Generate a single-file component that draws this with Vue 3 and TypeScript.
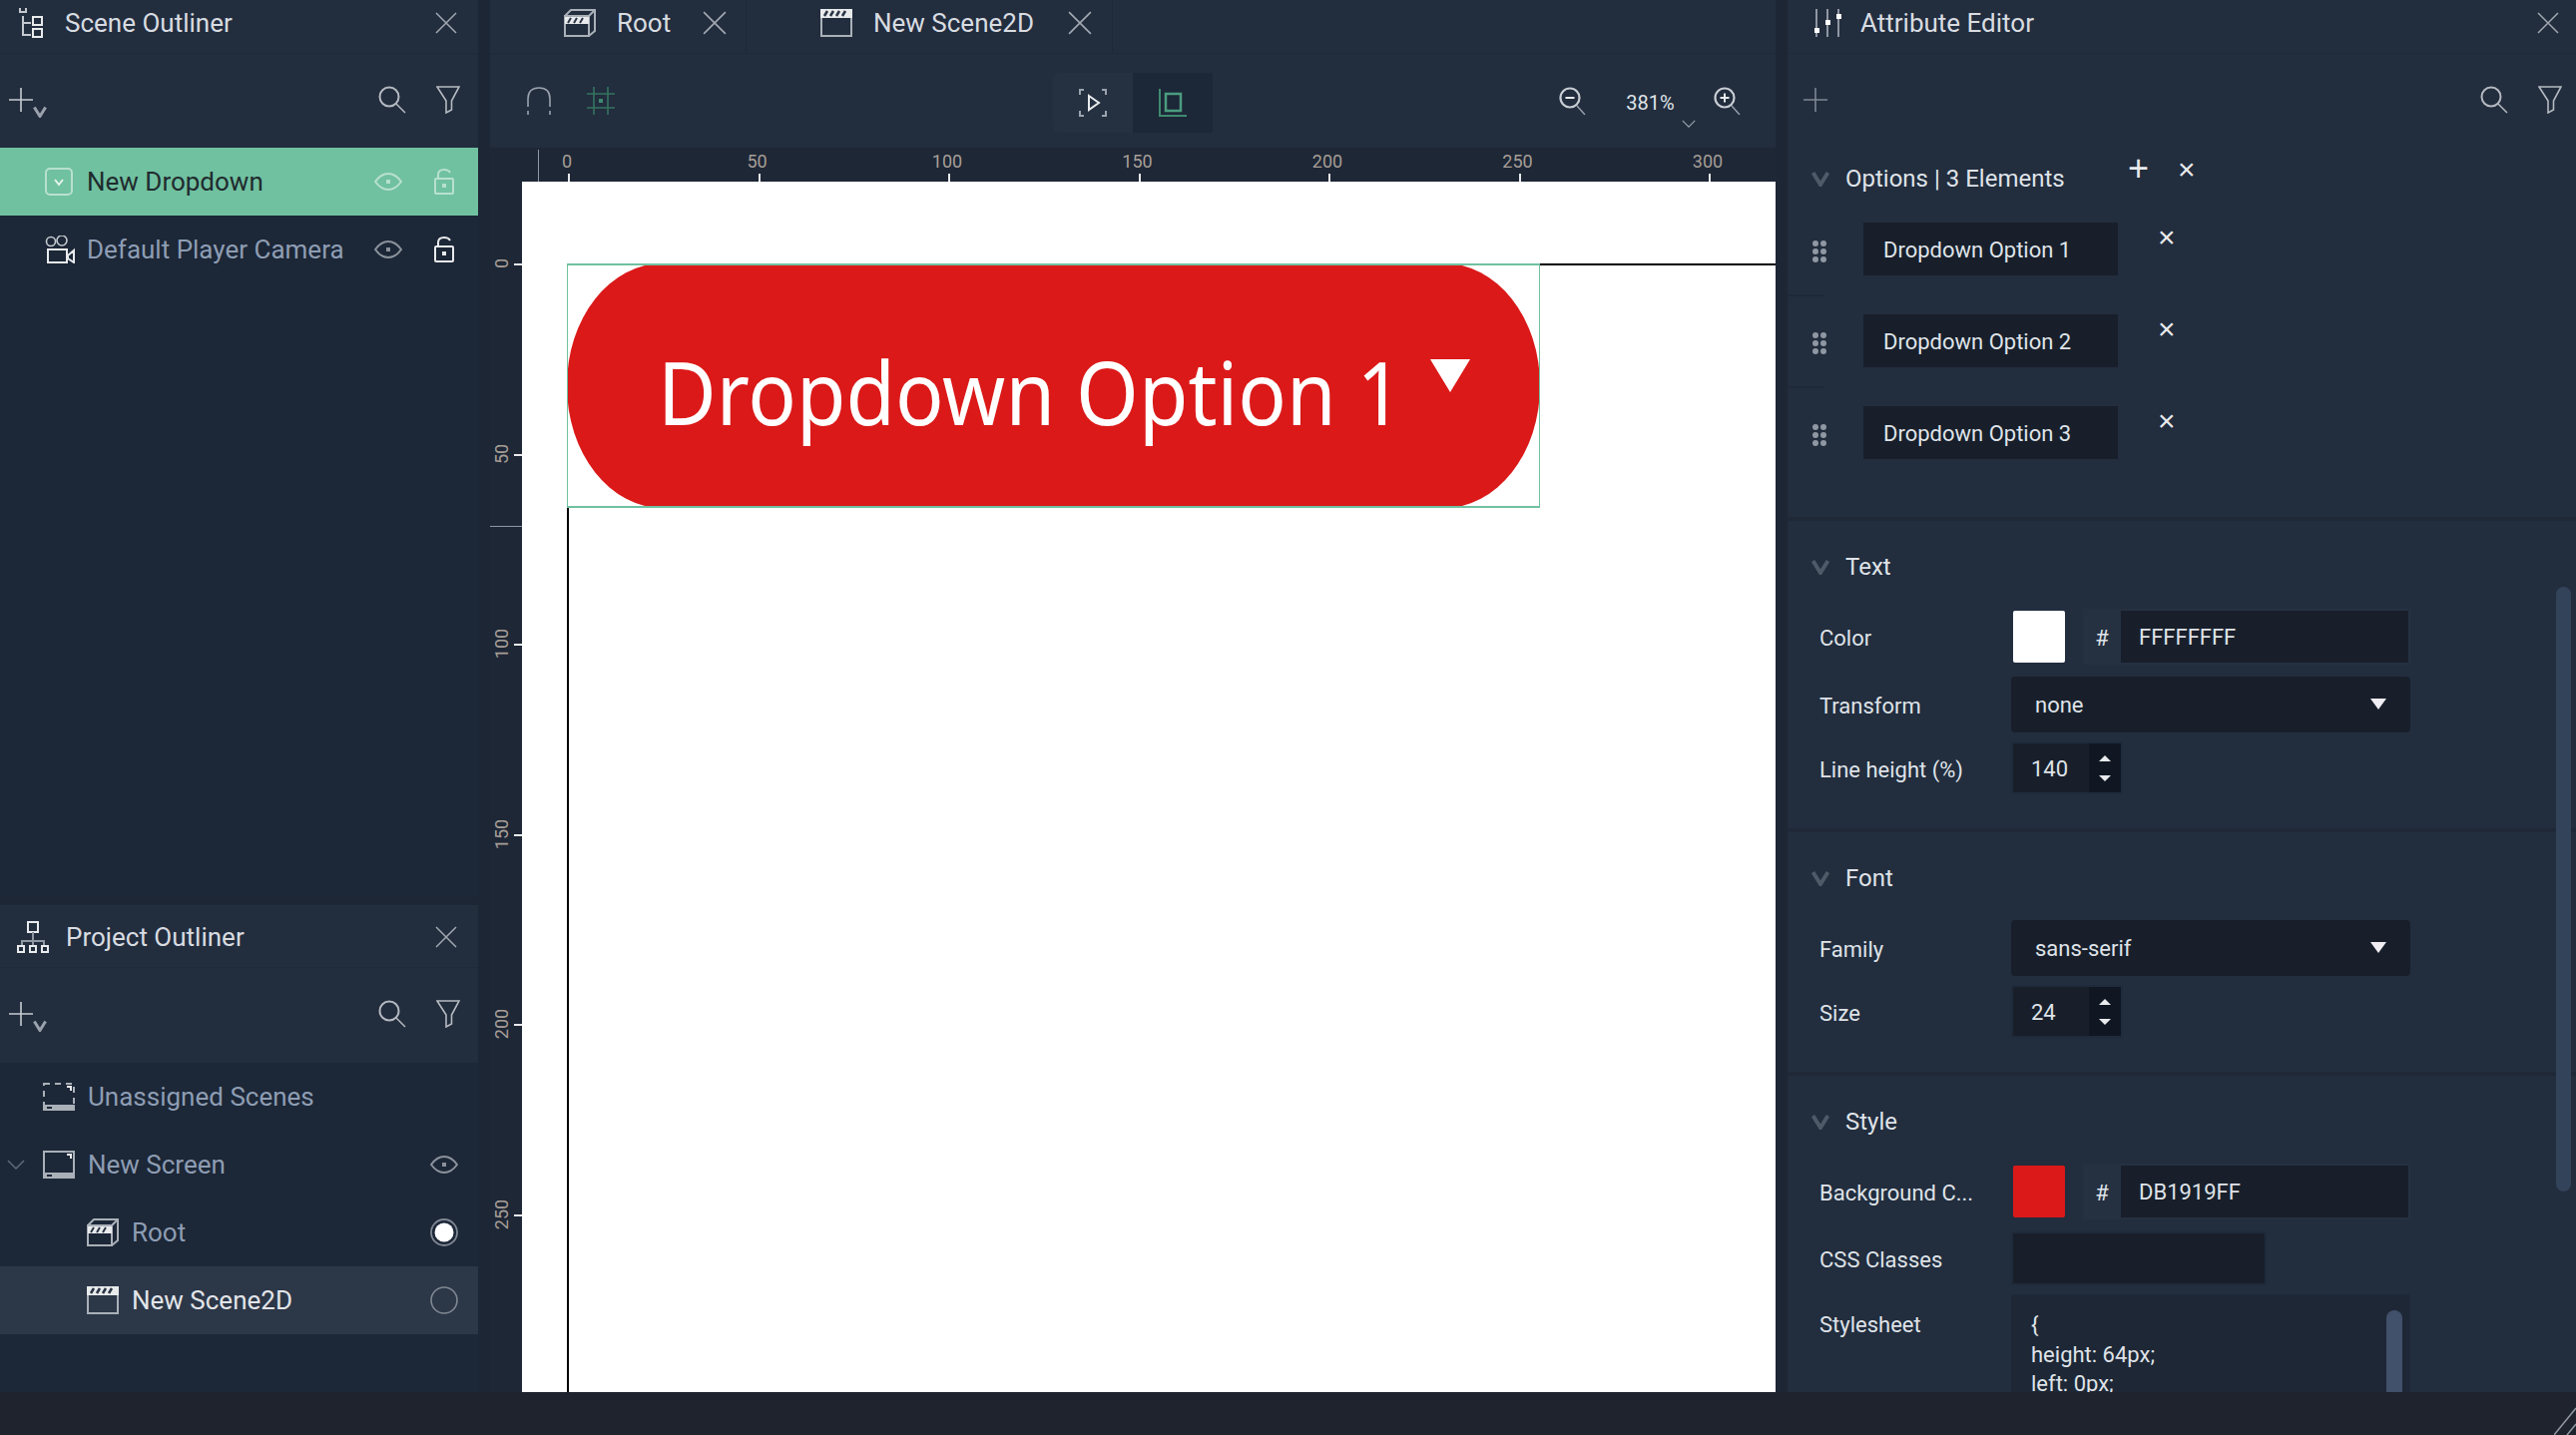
<template>
  <div class="app">
    <svg class="defs" width="0" height="0" aria-hidden="true">
      <symbol id="i-x" viewBox="0 0 22 22"><path d="M1 1L21 21M21 1L1 21" fill="none" stroke="currentColor" stroke-width="1.5" /></symbol>
      <symbol id="i-search" viewBox="0 0 28 28"><circle cx="11" cy="11" r="9.5" fill="none" stroke="currentColor" stroke-width="2" /><path d="M18 18L27 27" stroke="currentColor" stroke-width="1.5" /></symbol>
      <symbol id="i-filter" viewBox="0 0 24 28"><path d="M1 1H23L15.5 15V24L10 27V15Z" fill="none" stroke="currentColor" stroke-width="1.6" /></symbol>
      <symbol id="i-plus" viewBox="0 0 24 24"><path d="M12 0V24M0 12H24" stroke="currentColor" stroke-width="1.6" /></symbol>
      <symbol id="i-chev" viewBox="0 0 18 16"><path d="M1.500 2L9 14L16.500 2" fill="none" stroke="currentColor" stroke-width="4" /></symbol>
      <symbol id="i-chev-thin" viewBox="0 0 18 10"><path d="M1 1L9 9L17 1" fill="none" stroke="currentColor" stroke-width="1.5" /></symbol>
      <symbol id="i-eye" viewBox="0 0 28 18"><path d="M1 9C6 2 10 1 14 1S22 2 27 9C22 16 18 17 14 17S6 16 1 9Z" fill="none" stroke="currentColor" stroke-width="2" /><rect x="12" y="7" width="4" height="4" fill="currentColor" /></symbol>
      <symbol id="i-lock" viewBox="0 0 20 26"><path d="M4 9V6C4 3 6 1 10 1C13 1 15 2 16 4" fill="none" stroke="currentColor" stroke-width="2" /><rect x="1" y="10" width="18" height="15" rx="1" fill="none" stroke="currentColor" stroke-width="2" /><rect x="8" y="15" width="4" height="4" fill="currentColor" /></symbol>
      <symbol id="i-clap" viewBox="0 0 32 28"><rect x="1" y="1" width="30" height="26" fill="none" stroke="#aab0b8" stroke-width="2" /><rect x="0" y="0" width="32" height="9" fill="#e8eaec" /><path d="M4 7L7 2M10 7L13 2M16 7L19 2M22 7L25 2" stroke="#2a3444" stroke-width="2.5" /></symbol>
      <symbol id="i-clap3d" viewBox="0 0 32 28"><path d="M1 7H25V27H1ZM25 27L31 22V1H7L1 7M25 7L31 1" fill="none" stroke="#aab0b8" stroke-width="2" /><rect x="1" y="8" width="24" height="7" fill="#e8eaec" /><path d="M4 14L7 9M10 14L13 9M16 14L19 9" stroke="#2a3444" stroke-width="2" /></symbol>
      <symbol id="i-screen" viewBox="0 0 32 28"><rect x="1" y="1" width="30" height="26" fill="none" stroke="#aab0b8" stroke-width="2" /><rect x="0" y="22" width="32" height="6" fill="#aab0b8" /><rect x="4" y="24" width="5" height="2" fill="#1c2737" /><path d="M24 4H28V8" fill="none" stroke="#e8eaec" stroke-width="2" /></symbol>
      <symbol id="i-screen-dash" viewBox="0 0 32 28"><rect x="1" y="1" width="30" height="26" fill="none" stroke="#aab0b8" stroke-width="2" stroke-dasharray="6 5" /><rect x="0" y="22" width="32" height="6" fill="#aab0b8" /><rect x="4" y="24" width="5" height="2" fill="#1c2737" /><path d="M24 4H28V8" fill="none" stroke="#e8eaec" stroke-width="2" /></symbol>
      <symbol id="i-knob" viewBox="0 0 28 28"><circle cx="14" cy="14" r="13" fill="none" stroke="currentColor" stroke-width="1.8" /><circle cx="14" cy="14" r="9.5" fill="#fff" /></symbol>
      <symbol id="i-ring" viewBox="0 0 28 28"><circle cx="14" cy="14" r="13" fill="none" stroke="currentColor" stroke-width="1.6" /></symbol>
    </svg>

    <div class="col-left">
      <section class="panel outliner-top">
        <header class="panel-head">
          <svg class="head-ic" width="26" height="30" viewBox="0 0 26 30"><path d="M1 0V4H7V0M4 8V27H12M4 15H12" fill="none" stroke="#c4c9cf" stroke-width="2" /><rect x="14" y="9" width="9" height="8" fill="none" stroke="#e8eaec" stroke-width="2" /><rect x="14" y="21" width="9" height="8" fill="none" stroke="#e8eaec" stroke-width="2" /></svg>
          <span class="head-title">Scene Outliner</span>
          <svg class="ic-x"><use href="#i-x" /></svg>
        </header>
        <div class="tools">
          <svg class="ic-plus"><use href="#i-plus" /></svg>
          <svg class="ic-mini"><use href="#i-chev" /></svg>
          <svg class="ic-search"><use href="#i-search" /></svg>
          <svg class="ic-filter"><use href="#i-filter" /></svg>
        </div>
        <div class="tree">
          <div class="row selected">
            <svg class="row-ic" width="28" height="28" viewBox="0 0 28 28"><rect x="1" y="1" width="26" height="26" rx="4" fill="none" stroke="#b8e0cf" stroke-width="2" /><path d="M10 12L14 17L18 12" fill="none" stroke="#e6f4ee" stroke-width="2" /></svg>
            <span class="row-text">New Dropdown</span>
            <svg class="ic-eye"><use href="#i-eye" /></svg>
            <svg class="ic-lock"><use href="#i-lock" /></svg>
          </div>
          <div class="row">
            <svg class="row-ic camera" width="30" height="28" viewBox="0 0 30 28"><circle cx="6" cy="6" r="4.5" fill="none" stroke="#c4c9cf" stroke-width="1.6" /><circle cx="17" cy="5" r="5" fill="none" stroke="#c4c9cf" stroke-width="1.6" /><rect x="3" y="14" width="19" height="13" fill="none" stroke="#e8eaec" stroke-width="2" /><path d="M23 20L29 15V27L23 23Z" fill="none" stroke="#e8eaec" stroke-width="2" /></svg>
            <span class="row-text">Default Player Camera</span>
            <svg class="ic-eye"><use href="#i-eye" /></svg>
            <svg class="ic-lock white"><use href="#i-lock" /></svg>
          </div>
        </div>
      </section>

      <section class="panel outliner-bottom">
        <header class="panel-head tall">
          <svg class="head-ic" width="32" height="32" viewBox="0 0 32 32"><rect x="11" y="1" width="10" height="10" fill="none" stroke="#e8eaec" stroke-width="2" /><path d="M16 11V20M5 25V20H27V25M16 20V25" fill="none" stroke="#8f97a3" stroke-width="2" /><rect x="1" y="25" width="6" height="6" fill="none" stroke="#e8eaec" stroke-width="2" /><rect x="13" y="25" width="6" height="6" fill="none" stroke="#e8eaec" stroke-width="2" /><rect x="25" y="25" width="6" height="6" fill="none" stroke="#e8eaec" stroke-width="2" /></svg>
          <span class="head-title">Project Outliner</span>
          <svg class="ic-x"><use href="#i-x" /></svg>
        </header>
        <div class="tools tools-bottom">
          <svg class="ic-plus"><use href="#i-plus" /></svg>
          <svg class="ic-mini"><use href="#i-chev" /></svg>
          <svg class="ic-search"><use href="#i-search" /></svg>
          <svg class="ic-filter"><use href="#i-filter" /></svg>
        </div>
        <div class="tree">
          <div class="row top-level">
            <svg class="row-ic wide"><use href="#i-screen-dash" /></svg>
            <span class="row-text">Unassigned Scenes</span>
          </div>
          <div class="row top-level">
            <svg class="row-caret"><use href="#i-chev-thin" /></svg>
            <svg class="row-ic wide"><use href="#i-screen" /></svg>
            <span class="row-text">New Screen</span>
            <svg class="ic-eye solo"><use href="#i-eye" /></svg>
          </div>
          <div class="row child">
            <svg class="row-ic wide"><use href="#i-clap3d" /></svg>
            <span class="row-text">Root</span>
            <svg class="ic-radio"><use href="#i-knob" /></svg>
          </div>
          <div class="row child hover">
            <svg class="row-ic wide"><use href="#i-clap" /></svg>
            <span class="row-text">New Scene2D</span>
            <svg class="ic-radio"><use href="#i-ring" /></svg>
          </div>
        </div>
      </section>
    </div>

    <main class="col-center">
      <div class="tabs">
        <div class="tab tab-root">
          <svg class="tab-ic"><use href="#i-clap3d" /></svg>
          <span class="tab-text">Root</span>
          <svg class="ic-x tab-x"><use href="#i-x" /></svg>
        </div>
        <div class="tab tab-scene">
          <svg class="tab-ic"><use href="#i-clap" /></svg>
          <span class="tab-text">New Scene2D</span>
          <svg class="ic-x tab-x"><use href="#i-x" /></svg>
        </div>
      </div>
      <div class="canvas-tools">
        <div class="tools-left">
          <svg width="26" height="28" viewBox="0 0 26 28"><path d="M2 20V12C2 5 6 1 13 1S24 5 24 12V20" fill="none" stroke="#9aa2ad" stroke-width="1.6" /><path d="M2 24V28M24 24V28" stroke="#9aa2ad" stroke-width="1.6" /></svg>
          <svg width="28" height="28" viewBox="0 0 28 28"><path d="M7 0V28M21 0V28M0 7H28M0 21H28" stroke="#35745f" stroke-width="1.6" /><rect x="12" y="12" width="4" height="4" fill="#3f8a70" /></svg>
        </div>
        <div class="mode-group">
          <div class="mode-btn">
            <svg width="30" height="28" viewBox="0 0 30 28"><path d="M6 1H2V6M24 1H28V6M6 27H2V22M24 27H28V22" fill="none" stroke="#9aa2ad" stroke-width="2" /><path d="M11 7L21 14L11 21Z" fill="none" stroke="#e8eaec" stroke-width="2" /></svg>
          </div>
          <div class="mode-btn active">
            <svg width="28" height="28" viewBox="0 0 28 28"><path d="M1 0V27H28" fill="none" stroke="#3f8a70" stroke-width="2" /><rect x="7" y="5" width="15" height="17" fill="none" stroke="#4b9c80" stroke-width="2.500" /></svg>
          </div>
        </div>
        <div class="zoom-box">
          <svg width="28" height="28" viewBox="0 0 28 28"><circle cx="11" cy="11" r="9.5" fill="none" stroke="#c9ced4" stroke-width="2.2" /><path d="M18 19L26 28" stroke="#9aa2ad" stroke-width="1.4" /><path d="M6.500 11H15.500" stroke="#e8eaec" stroke-width="2" /></svg>
          <span class="zoom-val">381%</span>
          <svg class="zoom-caret"><use href="#i-chev-thin" /></svg>
          <svg width="28" height="28" viewBox="0 0 28 28"><circle cx="11" cy="11" r="9.500" fill="none" stroke="#c9ced4" stroke-width="2.2" /><path d="M18 19L26 28" stroke="#9aa2ad" stroke-width="1.4" /><path d="M6.500 11H15.500M11 6.500V15.500" stroke="#e8eaec" stroke-width="2" /></svg>
        </div>
      </div>
      <div class="ruler-top">
        <i class="ruler-mark"></i>
        <div v-for="(v, i) in rulerX" :key="v" class="tick-x" :style="{ left: `${78 + i * 190.5}px` }">
          <span>{{ v }}</span>
          <i></i>
        </div>
      </div>
      <div class="stage">
        <div class="ruler-left">
          <div v-for="(v, i) in rulerY" :key="v" class="tick-y" :style="{ top: `${82 + i * 190.5}px` }">
            <span>{{ v }}</span>
            <i></i>
          </div>
          <i class="ruler-line"></i>
        </div>
        <div class="canvas">
          <i class="guide-h"></i>
          <i class="guide-v"></i>
          <div class="dropdown">
            <span class="dropdown-text">Dropdown Option 1</span>
            <i class="dropdown-arrow"></i>
          </div>
          <i class="selection"></i>
        </div>
      </div>
    </main>

    <aside class="col-right">
      <header class="panel-head right-head">
        <svg class="head-ic" width="28" height="28" viewBox="0 0 28 28"><path d="M3 0V28M14 0V28M25 0V28" stroke="#8f97a3" stroke-width="2" /><rect x="1" y="19" width="5" height="5" fill="#fff" /><rect x="12" y="11" width="5" height="5" fill="#fff" /><rect x="23" y="5" width="5" height="5" fill="#fff" /></svg>
        <span class="head-title">Attribute Editor</span>
        <svg class="ic-x"><use href="#i-x" /></svg>
      </header>
      <div class="tools right-tools">
        <svg class="ic-plus dim"><use href="#i-plus" /></svg>
        <svg class="ic-search"><use href="#i-search" /></svg>
        <svg class="ic-filter"><use href="#i-filter" /></svg>
      </div>
      <div class="attrs">
        <section class="sect sect-options">
          <div class="sect-head options-head">
            <svg class="sect-caret"><use href="#i-chev" /></svg>
            <span>Options | 3 Elements</span>
            <b class="opt-plus">+</b>
            <b class="opt-x">×</b>
          </div>
          <template v-for="(o, i) in options" :key="o">
            <div class="option">
              <div class="grip"><i v-for="n in 6" :key="n"></i></div>
              <div class="opt-input">{{ o }}</div>
              <b class="opt-del">×</b>
            </div>
            <i v-if="i < options.length - 1" class="stub"></i>
          </template>
        </section>

        <section class="sect">
          <div class="sect-head">
            <svg class="sect-caret"><use href="#i-chev" /></svg>
            <span>Text</span>
          </div>
          <div class="field color-field">
            <label>Color</label>
            <i class="swatch white-swatch"></i>
            <div class="hex"><span class="hash">#</span><span class="hex-val">FFFFFFFF</span></div>
          </div>
          <div class="field select-field">
            <label>Transform</label>
            <div class="select">none<i class="caret"></i></div>
          </div>
          <div class="field spin-field">
            <label>Line height (%)</label>
            <div class="spin"><span class="spin-val">140</span><span class="spin-btns"><i class="up"></i><i class="down"></i></span></div>
          </div>
        </section>

        <section class="sect">
          <div class="sect-head">
            <svg class="sect-caret"><use href="#i-chev" /></svg>
            <span>Font</span>
          </div>
          <div class="field">
            <label>Family</label>
            <div class="select">sans-serif<i class="caret"></i></div>
          </div>
          <div class="field spin-field">
            <label>Size</label>
            <div class="spin"><span class="spin-val">24</span><span class="spin-btns"><i class="up"></i><i class="down"></i></span></div>
          </div>
        </section>

        <section class="sect sect-style">
          <div class="sect-head">
            <svg class="sect-caret"><use href="#i-chev" /></svg>
            <span>Style</span>
          </div>
          <div class="field color-field">
            <label>Background C...</label>
            <i class="swatch red-swatch"></i>
            <div class="hex"><span class="hash">#</span><span class="hex-val">DB1919FF</span></div>
          </div>
          <div class="field css-field">
            <label>CSS Classes</label>
            <div class="css-input"></div>
          </div>
          <div class="field sheet-field">
            <label>Stylesheet</label>
            <div class="sheet">
              <div>{</div>
              <div>height: 64px;</div>
              <div>left: 0px;</div>
              <i class="sheet-bar"></i>
            </div>
          </div>
        </section>
        <i class="attrs-bar"></i>
      </div>
    </aside>

    <footer class="status">
      <svg width="22" height="28" viewBox="0 0 22 28"><path d="M0 28L22 1M13 28L22 17" stroke="#8f97a3" stroke-width="1.5" fill="none" /></svg>
    </footer>
  </div>
</template>

<script setup lang="ts">
const rulerX: number[] = [0, 50, 100, 150, 200, 250, 300]
const rulerY: number[] = [0, 50, 100, 150, 200, 250]
const options: string[] = ['Dropdown Option 1', 'Dropdown Option 2', 'Dropdown Option 3']
</script>

<style>
html,
body {
  margin: 0;
  background: #1d2634;
}
</style>

<style scoped>
.app {
  display: grid;
  grid-template-columns: 479px 1288px 790px;
  grid-template-rows: 1395px 43px;
  column-gap: 12px;
  width: 2581px;
  height: 1438px;
  overflow: hidden;
  background: #1d2634;
  font-family: Roboto, "Liberation Sans", sans-serif;
  color: #dfe3e8;
}

.defs {
  position: absolute;
}

i {
  display: block;
}

.col-left {
  display: flex;
  flex-direction: column;
  gap: 7px;
  height: 1395px;
}

.panel {
  display: flex;
  flex-direction: column;
  background: #1c2737;
}

.outliner-top {
  height: 900px;
}

.outliner-bottom {
  height: 488px;
}

.panel-head {
  display: flex;
  align-items: center;
  flex: none;
  height: 54px;
  padding: 0 21px 7px 19px;
  background: #222d3e;
  border-bottom: 1px solid #1f2939;
  box-sizing: border-box;
}

.panel-head.tall {
  height: 63px;
  padding: 2px 21px 0 17px;
}

.head-ic {
  flex: none;
  margin-right: 20px;
}

.panel-head.tall .head-ic {
  margin-right: 17px;
}

.head-title {
  flex: 1;
  font-size: 26px;
  color: #d8dce1;
}

.ic-x {
  flex: none;
  width: 22px;
  height: 22px;
  color: #a2a8b1;
}

.tools {
  display: flex;
  align-items: center;
  flex: none;
  height: 94px;
  padding: 0 18px 3px 9px;
  background: #222d3e;
  box-sizing: border-box;
}

.tools-bottom {
  height: 95px;
}

.ic-plus {
  flex: none;
  width: 24px;
  height: 24px;
  color: #c8ccd1;
}

.ic-plus.dim {
  color: #7e8794;
}

.ic-mini {
  flex: none;
  width: 14px;
  height: 12px;
  margin: 24px auto 0 0;
  color: #9aa2ad;
}

.ic-search {
  flex: none;
  width: 28px;
  height: 28px;
  margin-right: 30px;
  color: #b5bac1;
}

.ic-filter {
  flex: none;
  width: 24px;
  height: 28px;
  color: #b5bac1;
}

.tree {
  flex: 1;
}

.row {
  display: flex;
  align-items: center;
  height: 68px;
  padding: 0 24px 0 45px;
  box-sizing: border-box;
  color: #8e9db3;
  font-size: 26px;
}

.row.top-level {
  padding-left: 43px;
}

.row.selected {
  background: #70c1a0;
  color: #1f2b2e;
}

.row.hover {
  background: #2c3748;
  color: #e2e5e9;
}

.row.child {
  padding-left: 87px;
  padding-right: 20px;
}

.row-ic {
  flex: none;
  margin-right: 14px;
}

.row-ic.camera {
  margin-right: 12px;
}

.row-ic.wide {
  width: 32px;
  height: 28px;
  margin-right: 13px;
}

.row-caret {
  flex: none;
  width: 18px;
  height: 10px;
  margin-left: -36px;
  margin-right: 18px;
  color: #5f6a79;
}

.row-text {
  flex: 1;
  white-space: nowrap;
}

.ic-eye {
  flex: none;
  width: 28px;
  height: 18px;
  margin-right: 32px;
  color: #8b929c;
}

.ic-eye.solo {
  margin-right: -4px;
}

.row.selected .ic-eye,
.row.selected .ic-lock {
  color: #b8e0cf;
}

.ic-lock {
  flex: none;
  width: 20px;
  height: 26px;
  color: #b9bec4;
}

.ic-lock.white {
  color: #e8eaec;
}

.ic-radio {
  flex: none;
  width: 28px;
  height: 28px;
  color: #7f8792;
}

.col-center {
  display: flex;
  flex-direction: column;
  height: 1395px;
}

.tabs {
  display: flex;
  flex: none;
  height: 54px;
  background: #222d3e;
  border-bottom: 1px solid #1f2939;
  box-sizing: border-box;
}

.tab {
  display: flex;
  align-items: center;
  box-sizing: border-box;
  padding: 0 0 7px 74px;
  border-right: 1px solid #1f2939;
  font-size: 26px;
  color: #d8dce1;
}

.tab-root {
  width: 257px;
}

.tab-scene {
  width: 367px;
}

.tab-ic {
  flex: none;
  width: 32px;
  height: 28px;
  margin-right: 21px;
}

.tab-text {
  white-space: nowrap;
}

.tab-x {
  width: 24px;
  height: 24px;
  margin-left: 32px;
}

.tab-scene .tab-x {
  margin-left: 34px;
}

.canvas-tools {
  display: flex;
  align-items: center;
  flex: none;
  height: 94px;
  background: #222d3e;
}

.tools-left {
  display: flex;
  align-items: center;
  gap: 35px;
  width: 564px;
  padding-left: 36px;
  box-sizing: border-box;
}

.mode-group {
  display: flex;
  height: 60px;
  margin-top: 4px;
}

.mode-btn {
  display: flex;
  align-items: center;
  justify-content: center;
  width: 80px;
  background: #253041;
  border-radius: 6px 0 0 6px;
}

.mode-btn.active {
  background: #1c2737;
  border-radius: 0;
}

.zoom-box {
  position: relative;
  display: flex;
  align-items: center;
  margin-left: 347px;
}

.zoom-val {
  width: 127px;
  padding-top: 3px;
  text-align: center;
  font-size: 20px;
  color: #dfe3e8;
}

.zoom-caret {
  position: absolute;
  left: 123px;
  top: 33px;
  width: 14px;
  height: 8px;
  color: #9aa2ad;
}

.ruler-top {
  position: relative;
  flex: none;
  height: 34px;
  background: #1e2736;
}

.ruler-mark {
  position: absolute;
  left: 48px;
  top: 2px;
  width: 1px;
  height: 32px;
  background: #8f97a3;
}

.tick-x {
  position: absolute;
  top: 0;
  height: 34px;
}

.tick-x span {
  position: absolute;
  left: -1px;
  top: 3px;
  transform: translateX(-50%);
  font-size: 18px;
  line-height: 22px;
  color: #a69e96;
}

.tick-x i {
  position: absolute;
  left: 0;
  top: 26px;
  width: 2px;
  height: 8px;
  background: #e8eaec;
}

.stage {
  display: flex;
  flex: 1;
  min-height: 0;
}

.ruler-left {
  position: relative;
  flex: none;
  width: 32px;
  background: #1e2736;
}

.tick-y {
  position: absolute;
  left: 0;
  width: 32px;
}

.tick-y span {
  position: absolute;
  left: 1px;
  top: 0;
  font-size: 18px;
  line-height: 22px;
  color: #a69e96;
  writing-mode: vertical-rl;
  transform: translateY(-50%) rotate(180deg);
  white-space: nowrap;
}

.tick-y i {
  position: absolute;
  left: 24px;
  top: 0;
  width: 8px;
  height: 2px;
  background: #e8eaec;
}

.ruler-line {
  position: absolute;
  left: 0;
  top: 345px;
  width: 32px;
  height: 1px;
  background: #8f97a3;
}

.canvas {
  position: relative;
  flex: 1;
  overflow: hidden;
  background: #fff;
}

.guide-h {
  position: absolute;
  left: 1019px;
  top: 82px;
  right: 0;
  height: 2px;
  background: #000;
}

.guide-v {
  position: absolute;
  left: 45px;
  top: 326px;
  bottom: 0;
  width: 2px;
  background: #000;
}

.dropdown {
  position: absolute;
  left: 45px;
  top: 82px;
  display: flex;
  align-items: center;
  width: 975px;
  height: 245px;
  padding-left: 91px;
  box-sizing: border-box;
  border-radius: 96px / 122px;
  background: #db1919;
  color: #fff;
}

.dropdown-text {
  font-family: "Noto Sans", "Open Sans", sans-serif;
  font-size: 87px;
  line-height: 1;
  white-space: nowrap;
  transform: translateY(6px) scaleX(0.925);
  transform-origin: left center;
  filter: blur(0.7px);
}

.dropdown-arrow {
  position: absolute;
  left: 865px;
  top: 96px;
  width: 0;
  height: 0;
  border-left: 20px solid transparent;
  border-right: 20px solid transparent;
  border-top: 33px solid #fff;
}

.selection {
  position: absolute;
  left: 45px;
  top: 82px;
  width: 975px;
  height: 245px;
  box-sizing: border-box;
  border: solid #70c1a0;
  border-width: 2px 1px;
}

.col-right {
  display: flex;
  flex-direction: column;
  height: 1395px;
  background: #222d3e;
}

.right-head {
  padding-left: 26px;
  padding-right: 17px;
}

.right-head .head-ic {
  margin-right: 19px;
}

.right-tools {
  padding: 0 14px 3px 16px;
}

.right-tools .ic-plus {
  margin-right: auto;
}

.attrs {
  position: relative;
  flex: 1;
  min-height: 0;
  overflow: hidden;
}

.sect {
  padding: 0 0 34px 32px;
  border-bottom: 4px solid #1e2837;
}

.sect-options {
  padding-bottom: 39px;
  padding-left: 0;
}

.sect-style {
  border-bottom: 0;
}

.sect-head {
  display: flex;
  align-items: center;
  height: 88px;
  padding-top: 3px;
  margin-left: -8px;
  box-sizing: border-box;
  font-size: 24px;
  color: #dfe3e8;
}

.options-head {
  position: relative;
  height: 57px;
  padding-top: 5px;
  margin-left: 24px;
}

.sect-caret {
  flex: none;
  width: 18px;
  height: 16px;
  margin-right: 16px;
  color: #4f5a69;
}

.opt-plus,
.opt-x,
.opt-del {
  position: absolute;
  font-family: "Liberation Sans", sans-serif;
  font-weight: 400;
  color: #e8eaec;
}

.opt-plus {
  left: 317px;
  top: 3px;
  font-size: 36px;
  line-height: 36px;
}

.opt-x {
  left: 367px;
  top: 4px;
  font-size: 30px;
  line-height: 36px;
}

.option {
  position: relative;
  display: flex;
  height: 90px;
  padding: 18px 0 0 25px;
  box-sizing: border-box;
}

.grip {
  display: grid;
  grid-template-columns: 6px 6px;
  gap: 2px;
  align-content: start;
  width: 14px;
  margin: 18px 37px 0 0;
}

.grip i {
  width: 6px;
  height: 6px;
  border-radius: 50%;
  background: #8f97a3;
}

.opt-input {
  width: 255px;
  height: 53px;
  padding: 1px 0 0 20px;
  box-sizing: border-box;
  background: #181f2b;
  font-size: 22px;
  line-height: 53px;
}

.opt-del {
  left: 371px;
  top: 15px;
  font-size: 30px;
  line-height: 36px;
}

.stub {
  width: 37px;
  height: 2px;
  background: #1e2837;
}

.field {
  display: flex;
  align-items: center;
  min-height: 56px;
  margin-bottom: 9px;
}

.field:last-child {
  margin-bottom: 0;
}

.field label {
  flex: none;
  width: 192px;
  padding-top: 3px;
  font-size: 22px;
  color: #dfe3e8;
  white-space: nowrap;
}

.color-field {
  margin-bottom: 12px;
}

.swatch {
  flex: none;
  width: 52px;
  height: 52px;
  margin: 0 18px 0 2px;
  border-radius: 2px;
}

.white-swatch {
  background: #fff;
}

.red-swatch {
  background: #db1919;
}

.hex {
  display: flex;
  width: 328px;
  height: 56px;
  padding: 2px;
  box-sizing: border-box;
  background: #253041;
}

.hash {
  width: 36px;
  padding: 2px 2px 0 0;
  box-sizing: border-box;
  text-align: center;
  font-size: 22px;
  line-height: 52px;
}

.hex-val {
  flex: 1;
  padding: 2px 0 0 18px;
  background: #181f2b;
  font-size: 22px;
  line-height: 50px;
}

.select {
  position: relative;
  width: 400px;
  height: 56px;
  padding: 2px 0 0 24px;
  box-sizing: border-box;
  border-radius: 4px;
  background: #181f2b;
  font-size: 22px;
  line-height: 54px;
}

.caret {
  position: absolute;
  right: 24px;
  top: 22px;
  width: 0;
  height: 0;
  border-left: 8px solid transparent;
  border-right: 8px solid transparent;
  border-top: 11px solid #f0eef2;
}

.spin-field {
  min-height: 53px;
  margin-bottom: 0;
}

.spin {
  display: flex;
  width: 112px;
  height: 53px;
  padding: 2px;
  box-sizing: border-box;
  background: #1f2a3a;
}

.spin-val {
  width: 76px;
  padding: 2px 0 0 18px;
  box-sizing: border-box;
  background: #181f2b;
  font-size: 22px;
  line-height: 47px;
}

.spin-btns {
  position: relative;
  flex: 1;
  background: #101723;
}

.up,
.down {
  position: absolute;
  left: 10px;
  width: 0;
  height: 0;
  border-left: 6px solid transparent;
  border-right: 6px solid transparent;
}

.up {
  top: 12px;
  border-bottom: 6px solid #e8eaec;
}

.down {
  bottom: 11px;
  border-top: 6px solid #e8eaec;
}

.css-field {
  min-height: 54px;
  margin-bottom: 9px;
}

.css-input {
  width: 256px;
  height: 54px;
  background: #181f2b;
  box-sizing: border-box;
  border: 2px solid #1f2a3a;
}

.sheet-field {
  align-items: flex-start;
  min-height: 200px;
}

.field.sheet-field label {
  margin-top: 15px;
}

.sheet {
  position: relative;
  width: 400px;
  height: 200px;
  padding: 16px 20px;
  box-sizing: border-box;
  background: #1e2736;
  border-radius: 4px;
  font-size: 22px;
  line-height: 29.500px;
}

.sheet-bar {
  position: absolute;
  right: 8px;
  top: 16px;
  width: 16px;
  height: 120px;
  border-radius: 8px;
  background: #41506b;
}

.attrs-bar {
  position: absolute;
  right: 5px;
  top: 440px;
  width: 15px;
  height: 606px;
  border-radius: 8px;
  background: #33435a;
}

.status {
  grid-column: 1 / -1;
  display: flex;
  align-items: flex-end;
  justify-content: flex-end;
  background: #1e232e;
}
</style>
